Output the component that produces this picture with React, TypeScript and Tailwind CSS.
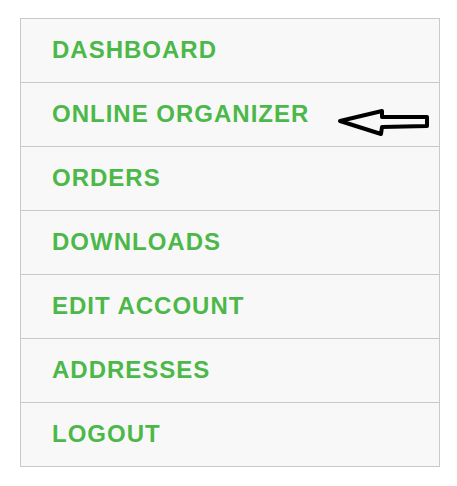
const links = [
  'DASHBOARD',
  'ONLINE ORGANIZER',
  'ORDERS',
  'DOWNLOADS',
  'EDIT ACCOUNT',
  'ADDRESSES',
  'LOGOUT',
];

// Hand-drawn looking arrow pointing at the organizer link
const Arrow = () => (
  <svg width="96" height="32" viewBox="0 0 96 32" className="absolute left-[314px] top-[24px]">
    <path
      d="M5 14 L47 4 L47 10 L92 10 L92 19 L47 20 L46 27 Z"
      fill="none"
      stroke="#000"
      strokeWidth="4"
      strokeLinejoin="round"
    />
  </svg>
);

export default function App() {
  return (
    <div className="min-h-[486px] w-[457px] bg-white pl-[20px] pt-[18px]">
      <ul className="w-[420px] border border-[#c9c9c9] bg-[#f8f8f8]">
        {links.map((label) => (
          <li
            key={label}
            className="relative flex h-[64px] items-center border-t border-[#c9c9c9] pb-[2px] pl-[31px] first:h-[63px] first:border-t-0"
          >
            <a
              href="#"
              className="text-[24px] font-bold leading-[24px] tracking-[1px] text-[#4cb849]"
              style={{ fontFamily: '"Liberation Sans", Arial, sans-serif' }}
            >
              {label}
            </a>
            {label === 'ONLINE ORGANIZER' && <Arrow />}
          </li>
        ))}
      </ul>
    </div>
  );
}
